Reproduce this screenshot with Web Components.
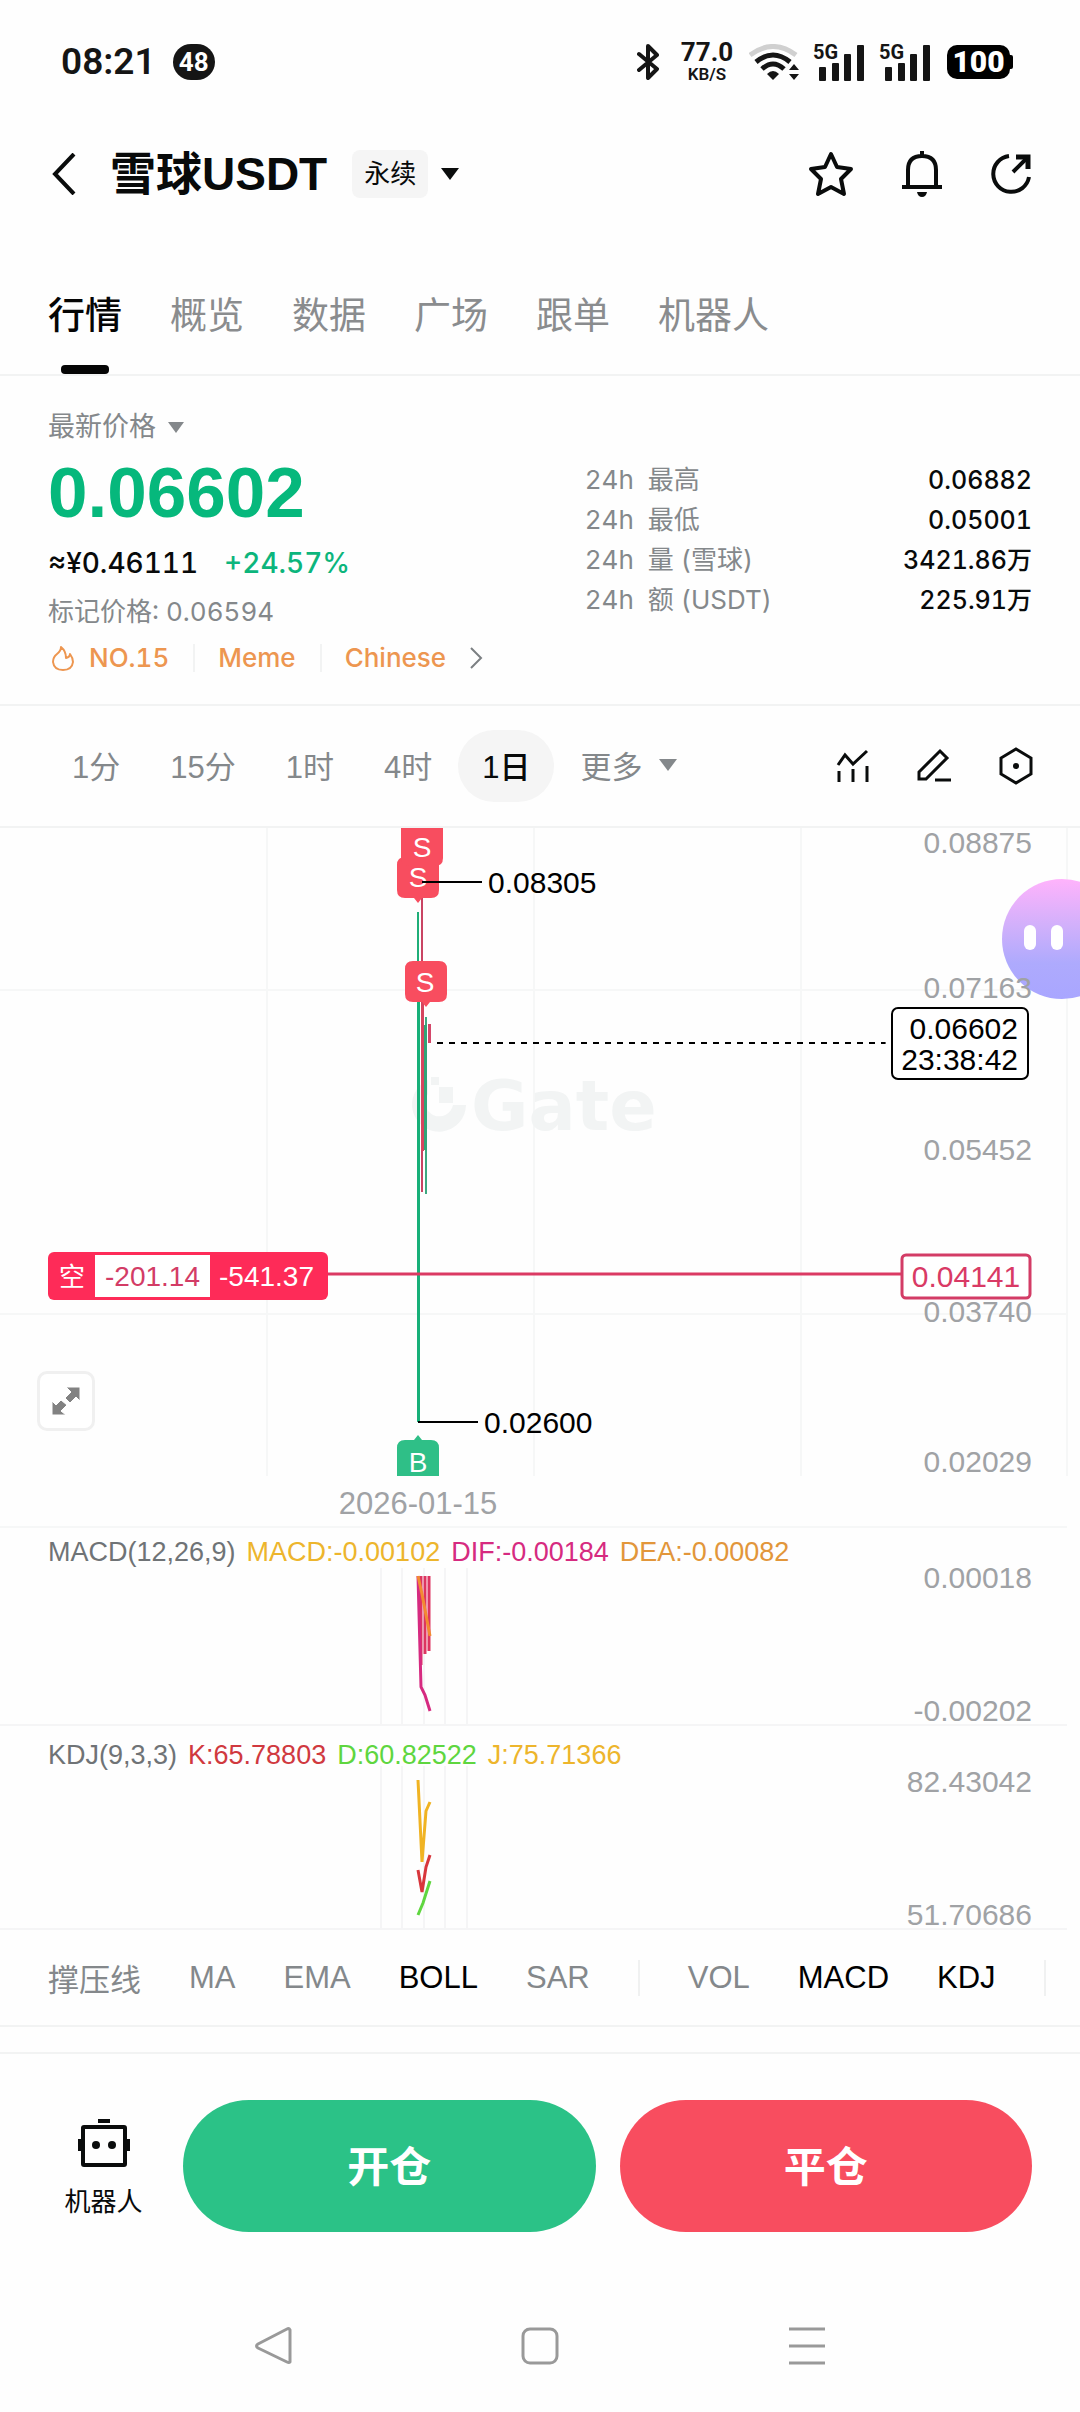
<!DOCTYPE html>
<html lang="zh-CN">
<head>
<meta charset="utf-8">
<meta name="viewport" content="width=device-width, initial-scale=1">
<title>雪球USDT 永续</title>
<style>
:root{--ink:#080a0a;--muted:#84888b;--axis:#a0a2a5;--line:#f2f3f3;--up:#2bc287;--down:#f84d5f;--gain:#0cb57c;--tag:#ed9650;--page:#fefefe;--ui:"Inter","Noto Sans CJK SC",sans-serif;--plot:"Liberation Sans","Noto Sans CJK SC",sans-serif}
body{margin:0;background:var(--page);color:var(--ink);font-family:var(--plot);min-height:100vh}
</style>
</head>
<body>
<trade-app></trade-app>
<script>
const base = `<style>
:host{display:block;box-sizing:border-box}
*,*::before{box-sizing:border-box}
button{appearance:none;border:0;background:none;padding:0;margin:0;font:inherit;color:inherit;cursor:pointer;display:flex;align-items:center;justify-content:center}
a{color:inherit;text-decoration:none}
svg{display:block;flex:none}
</style>`;
const define = (name, html) => customElements.define(name, class extends HTMLElement {
  constructor(){ super(); this.attachShadow({mode:'open'}).innerHTML = base + html; }
});

define('signal-bars', `<style>
:host{position:relative;width:52px;height:37px;margin-left:14px}
span{position:absolute;left:0;top:-4px;font-size:20px;line-height:24px;font-weight:700}
</style><svg width="52" height="37" viewBox="0 0 52 37" fill="#151515"><rect x="6" y="23" width="7" height="14" rx="1"/><rect x="19" y="19" width="7" height="18" rx="1"/><rect x="31" y="10" width="7" height="27" rx="1"/><rect x="44" y="1" width="7" height="36" rx="1"/></svg><span>5G</span>`);

define('status-bar', `<style>
:host{height:124px;padding:0 67px 0 61px;display:flex;align-items:center;justify-content:space-between;font-family:Roboto,sans-serif;font-weight:600;color:#151515}
.l,.r{display:flex;align-items:center}
.time{font-size:37px;line-height:40px}
.count{margin-left:17px;width:42px;height:36px;border-radius:18px;background:#151515;color:#fff;font-size:26px;line-height:36px;text-align:center;font-weight:700}
.speed{display:flex;flex-direction:column;align-items:center;margin:0 14px 0 20px;width:56px}
.speed b{font-size:26px;line-height:24px;font-weight:700}
.speed i{font-size:17px;line-height:20px;font-style:normal}
.bat{margin-left:16px;display:flex;align-items:center}
.bat b{background:#000;color:#fff;border-radius:10px;width:63px;height:34px;font-size:30px;line-height:34px;text-align:center}
.bat::after{content:"";width:3px;height:14px;background:#000;border-radius:0 2px 2px 0}
</style>
<div class="l"><span class="time">08:21</span><span class="count">48</span></div>
<div class="r">
<svg width="22" height="36" viewBox="0 0 22 36" fill="none" stroke="#151515" stroke-width="4" stroke-linejoin="round" stroke-linecap="round"><path d="M2 10 20 25 11 34V2L20 11 2 26"/></svg>
<span class="speed"><b>77.0</b><i>KB/S</i></span>
<svg width="50" height="36" viewBox="0 0 50 36" fill="none" stroke-width="5"><path d="M1 11Q24-6 47 11" stroke="#d0d0d0"/><path d="M7 18Q24 4 41 18M13 25Q24 15 35 25" stroke="#151515"/><path d="M18 30Q24 24 30 30L24 36Z" fill="#151515"/><path d="M40 26 45 20 50 26ZM40 30 45 36 50 30Z" fill="#151515"/></svg>
<signal-bars></signal-bars><signal-bars></signal-bars>
<span class="bat"><b>100</b></span>
</div>`);

define('pair-header', `<style>
:host{height:100px;padding:0 48px 0 52px;display:flex;align-items:center;justify-content:space-between}
.l,.r{display:flex;align-items:center}
h1{margin:0 0 0 34px;font-size:46px;line-height:60px;font-weight:700;font-family:var(--plot)}
.kind{margin:0 12px 0 25px;gap:13px;font-size:26px}
.kind span{background:#f5f5f5;border-radius:8px;width:76px;line-height:48px}
.r{gap:47px}
</style>
<div class="l"><button aria-label="返回"><svg width="24" height="42" viewBox="0 0 24 42" fill="none" stroke="#0a0c0c" stroke-width="4"><path d="M22 1 3 21 22 41"/></svg></button>
<h1>雪球USDT</h1>
<button class="kind"><span>永续</span><svg width="18" height="12"><path d="M0 0H18L9 12Z" fill="#0a0c0c"/></svg></button></div>
<div class="r">
<button aria-label="收藏"><svg width="46" height="46" viewBox="0 0 46 46" fill="none" stroke="#0a0c0c" stroke-width="4" stroke-linejoin="round"><path d="M23 3 29 16 43 18 33 28 36 43 23 36 10 43 13 28 3 18 17 16Z"/></svg></button>
<button aria-label="提醒"><svg width="42" height="48" viewBox="0 0 42 48" fill="none" stroke="#0a0c0c" stroke-width="4"><path d="M21 1V6M7 37V20Q7 6 21 6T35 20V37M1 37H41"/><path d="M16 42H26Q25 47 21 47T16 42Z" fill="#0a0c0c" stroke="none"/></svg></button>
<button aria-label="分享"><svg width="42" height="42" viewBox="0 0 42 42" fill="none" stroke="#0a0c0c" stroke-width="4"><path d="M19 3A18 18 0 1 0 39 24M23 19 37 5"/><path d="M26 4H38V16" stroke-width="5"/></svg></button>
</div>`);

define('market-tabs', `<style>
:host{border-bottom:2px solid var(--line);padding:52px 48px 0}
nav{display:flex;gap:48px;height:98px}
a{display:flex;flex-direction:column;align-items:center;justify-content:space-between;padding-top:14px;font-size:37px;line-height:54px;color:#8a8c8e}
a[aria-current]{color:#050505;font-weight:500}
a[aria-current]::after{content:"";width:48px;height:9px;border-radius:4px;background:#050505}
</style>
<nav><a href="#m" aria-current="page">行情</a><a href="#o">概览</a><a href="#d">数据</a><a href="#s">广场</a><a href="#c">跟单</a><a href="#b">机器人</a></nav>`);

define('price-summary', `<style>
:host{display:grid;grid-template-columns:6fr 5fr;padding:33px 48px 28px;border-bottom:2px solid var(--line);font-family:var(--ui);font-variant-numeric:tabular-nums;color:var(--muted);font-size:26px}
.src{font-size:27px;line-height:36px;gap:12px}
.last{font-family:var(--plot);font-size:71px;line-height:96px;font-weight:700;color:#06b87c}
.conv{display:flex;gap:26px;font-size:28px;line-height:44px;font-weight:500;color:var(--ink)}
.conv em{font-style:normal;color:var(--gain)}
.mark{line-height:54px}
.tags{display:flex;align-items:center;line-height:37px;font-weight:500;color:var(--tag)}
.tags a+a{border-left:2px solid var(--line);margin-left:24px;padding-left:23px;line-height:28px}
.tags a:first-child{display:flex;align-items:center;gap:15px;padding-left:4px}
.tags button{margin-left:24px}
dl{margin:51px 0 0}
dl div{display:flex;justify-content:space-between;line-height:40px}
dt{white-space:pre}
dd{margin:0;color:var(--ink);font-weight:500;font-size:25px}
</style>
<section><button class="src">最新价格<svg width="16" height="11"><path d="M0 0H16L8 11Z" fill="#84888b"/></svg></button>
<div class="last">0.06602</div>
<div class="conv"><span>≈¥0.46111</span><em>+24.57%</em></div>
<div class="mark">标记价格: 0.06594</div>
<div class="tags"><a href="#rank"><svg width="22" height="26" viewBox="0 0 22 26" fill="none" stroke="#ed9650" stroke-width="2" stroke-linejoin="round"><path d="M9 2Q14 6 14 13Q18 12 18 9Q21 13 21 17Q20 25 11 25Q2 25 1 17Q1 12 5 9Q9 6 9 2Z"/></svg>NO.15</a><a href="#meme">Meme</a><a href="#chinese">Chinese</a>
<button aria-label="更多标签"><svg width="13" height="22" viewBox="0 0 13 22" fill="none" stroke="#7b7f82" stroke-width="2"><path d="M1 1 11 11 1 21"/></svg></button></div></section>
<dl><div><dt>24h  最高</dt><dd>0.06882</dd></div><div><dt>24h  最低</dt><dd>0.05001</dd></div><div><dt>24h  量 (雪球)</dt><dd>3421.86万</dd></div><div><dt>24h  额 (USDT)</dt><dd>225.91万</dd></div></dl>`);

define('time-frames', `<style>
:host{height:122px;border-bottom:2px solid var(--line);padding:0 46px 0 48px;display:flex;align-items:center;justify-content:space-between;font-size:31px;color:var(--muted)}
div{display:flex;align-items:center;gap:2px}
.t button{height:72px;padding:0 24px 3px;border-radius:36px;gap:17px}
.t [aria-pressed=true]{background:#f5f5f5;color:var(--ink);font-weight:500}
.i{gap:46px}
</style>
<div class="t"><button>1分</button><button>15分</button><button>1时</button><button>4时</button><button aria-pressed="true">1日</button><button>更多<svg width="18" height="12"><path d="M0 0H18L9 12Z" fill="#84888b"/></svg></button></div>
<div class="i">
<button aria-label="指标"><svg width="34" height="34" viewBox="0 0 34 34" fill="none" stroke="#0a0c0c" stroke-width="3"><path d="M2 16 9 6 17 15 31 2M3 22V33M17 20V33M31 17V33"/></svg></button>
<button aria-label="画线"><svg width="36" height="36" viewBox="0 0 36 36" fill="none" stroke="#0a0c0c" stroke-width="3"><path d="M3 24 24 3 31 10 10 31H3ZM19 32H35"/></svg></button>
<button aria-label="设置"><svg width="36" height="38" viewBox="0 0 36 38" fill="none" stroke="#0a0c0c" stroke-width="3"><path d="M18 2 33 11V27L18 36 3 27V11Z"/><circle cx="18" cy="19" r="3" fill="#0a0c0c" stroke="none"/></svg></button>
</div>`);

define('candle-chart', `<style>
:host{position:relative;height:700px;overflow-x:clip;font-size:30px}
.grid{stroke:#f6f7f7;stroke-width:2;position:absolute}
.axis{fill:var(--axis);text-anchor:end}
.s{fill:#fff;font-size:28px;text-anchor:middle}
.expand{position:absolute;left:37px;top:543px;width:58px;height:60px;border:3px solid #f0f0f0;border-radius:10px;background:#fff}
.bot{position:absolute;right:-42px;top:51px;width:120px;height:120px;border-radius:60px;background:linear-gradient(#ffb3fc,#d0b0fb 40%,#aeaafd 70%,#a9a6ff);justify-content:flex-start;gap:15px;padding:0 0 4px 22px}
.bot i{width:12px;height:25px;border-radius:6px;background:#fff}
.top{position:relative;overflow:visible}
</style>
<svg class="grid" width="100%" height="700"><path d="M267 0V648M534 0V648M801 0V648M1067 0V648"/><line x1="0" x2="1067" y1="162" y2="162"/><line x1="0" x2="1067" y1="486" y2="486"/><line x1="0" x2="1067" y1="699" y2="699"/></svg>
<button class="bot" aria-label="助手"><i></i><i></i></button>
<svg class="top" width="100%" height="700">
<g fill="#f2f4f4"><path d="M428 252A27 27 0 1 0 466 277H453A14 14 0 1 1 428 266ZM431 249H439V257H431ZM439 259H453V275H439Z"/><text x="471" y="302" font-family="DejaVu Sans" font-weight="700" font-size="70">Gate</text></g>
<g>
<rect x="417" y="84" width="2" height="60" fill="#1fae78"/><rect x="417" y="144" width="3" height="450" fill="#17b079"/>
<rect x="421" y="66" width="2" height="298" fill="#c94463"/><rect x="421" y="175" width="3" height="148" fill="#d6455f"/>
<rect x="425" y="189" width="2" height="177" fill="#3da880"/><rect x="424" y="197" width="3" height="125" fill="#30a577"/>
<rect x="428" y="196" width="3" height="19" fill="#d4476a"/></g>
<path d="M405 29H431Q439 29 439 37V62Q439 70 431 70H422L418 75 414 70H405Q397 70 397 62V37Q397 29 405 29Z" fill="var(--down)"/>
<text class="s" x="418" y="59">S</text>
<path d="M401 0H443V30Q443 38 435 38H409Q401 38 401 30Z" fill="var(--down)"/><text class="s" x="422" y="29">S</text>
<path d="M413 133H439Q447 133 447 141V166Q447 174 439 174H430L426 179 422 174H413Q405 174 405 166V141Q405 133 413 133Z" fill="var(--down)"/><text class="s" x="425" y="164">S</text>
<path d="M397 648V620Q397 612 405 612H414L418 607 422 612H431Q439 612 439 620V648Z" fill="#2fbf87"/><text class="s" x="418" y="644">B</text>
<path d="M422 54H482M418 594H478" stroke="#000" stroke-width="2"/>
<text x="488" y="65" fill="#000">0.08305</text><text x="484" y="605" fill="#000">0.02600</text>
<text x="418" y="686" text-anchor="middle" font-size="31" fill="#a0a2a5">2026-01-15</text>
<line x1="328" x2="90%" y1="446" y2="446" stroke="#db3a63" stroke-width="3"/>
<line x1="437" x2="82%" y1="215" y2="215" stroke="#000" stroke-width="2" stroke-dasharray="6 6"/>
<rect x="48" y="424" width="280" height="48" rx="6" fill="#fe2b58"/><rect x="95" y="427" width="115" height="42" fill="#fff"/>
<g font-size="28"><text x="59" y="458" font-size="26" fill="#fff">空</text><text x="105" y="458" fill="#d33c66">-201.14</text><text x="219" y="458" fill="#fff">-541.37</text></g>
<svg x="100%" overflow="visible"><g class="axis"><text x="-48" y="25">0.08875</text><text x="-48" y="170">0.07163</text><text x="-48" y="332">0.05452</text><text x="-48" y="494">0.03740</text><text x="-48" y="644">0.02029</text></g>
<rect x="-188" y="180" width="136" height="71" rx="6" fill="#fff" stroke="#000" stroke-width="2"/><text x="-62" y="211" text-anchor="end">0.06602</text><text x="-62" y="242" text-anchor="end">23:38:42</text>
<rect x="-178" y="427" width="128" height="43" rx="4" fill="#fff" stroke="#d33c66" stroke-width="3"/><text x="-114" y="459" text-anchor="middle" fill="#d93a65">0.04141</text></svg>
</svg>
<button class="expand" aria-label="全屏"><svg width="30" height="30" viewBox="0 0 30 30" fill="#828282"><path d="M15 1H29V15L25 11 19 17 14 12 20 6ZM1 15 5 19 10 14 16 19 10 25 15 29H1Z" stroke="#fff" stroke-width="1"/></svg></button>`);

const panel = (h, y1, y2, legend, labels, drawing) => `<style>
:host{display:grid;height:${h}px;font-size:27px}
svg,.legend{grid-area:1/1}
.legend{margin:0;padding:0 48px;display:flex;gap:11px;line-height:48px;height:48px}
.axis{fill:var(--axis);text-anchor:end;font-size:30px}
</style><svg width="100%" height="${h}"><path d="M381 40V${h-2}M402 40V${h-2}M424 40V${h-2}M445 40V${h-2}M467 40V${h-2}M0 ${h-1}H1067" stroke="#f5f5f6" stroke-width="2"/>
<g fill="none" stroke-width="3">${drawing}</g>
<svg x="100%" overflow="visible"><g class="axis"><text x="-48" y="${y1}">${labels[0]}</text><text x="-48" y="${y2}">${labels[1]}</text></g></svg></svg>
<p class="legend">${legend}</p>`;

define('macd-panel', panel(198, 60, 193, `<span style="color:#6f7376">MACD(12,26,9)</span><span style="color:#edb52c">MACD:-0.00102</span><span style="color:#d62a80">DIF:-0.00184</span><span style="color:#e2963a">DEA:-0.00082</span>`, ['0.00018','-0.00202'],
`<path d="M421 48V137M425 48V126M429 48V123" stroke="#dd3560"/><path d="M418 48 421 159 425 167 430 183" stroke="#d62a80"/><path d="M418 48 422 66 430 108" stroke="#f28a32"/>`));
define('kdj-panel', `<style>.legend{padding-top:5px!important}</style>` + panel(204, 66, 199, `<span style="color:#6f7376">KDJ(9,3,3)</span><span style="color:#d0393f">K:65.78803</span><span style="color:#5fd63f">D:60.82522</span><span style="color:#edb52c">J:75.71366</span>`, ['82.43042','51.70686'],
`<path d="M418 54 422 136 426 85 430 76" stroke="#f0b323"/><path d="M418 144 422 166 426 141 430 129" stroke="#d8363c"/><path d="M418 189 423 177 430 155" stroke="#5fd63f"/>`));

define('indicator-bar', `<style>
:host{height:97px;padding:0 0 0 48px;display:flex;align-items:center;gap:48px;border-bottom:2px solid var(--line);font-size:31px;color:var(--muted);overflow:hidden}
button{flex:none}
[aria-pressed=true]{color:#000}
i{flex:none;width:2px;height:36px;background:#f0f1f1}
</style><button>撑压线</button><button>MA</button><button>EMA</button><button aria-pressed="true">BOLL</button><button>SAR</button><i></i><button>VOL</button><button aria-pressed="true">MACD</button><button aria-pressed="true">KDJ</button><i></i>`);

define('trade-bar', `<style>
:host{margin-top:25px;border-top:2px solid var(--line);padding:46px 48px 0;display:flex;gap:24px}
.go{flex:1;height:132px;border-radius:66px;color:#fff;font-size:42px;font-weight:700;padding-bottom:6px}
.open{background:var(--up)}.close{background:var(--down)}
.bot{width:111px;flex-direction:column;gap:15px;padding-top:6px;font-size:26px;line-height:38px}
</style><button class="bot"><svg width="52" height="50" viewBox="0 0 52 50" fill="none" stroke="#0a0c0c" stroke-width="4"><rect x="5" y="9" width="42" height="38" rx="1"/><path d="M20 3H32M2 21V33M50 21V33"/><circle cx="18" cy="27" r="4" fill="#0a0c0c" stroke="none"/><circle cx="34" cy="27" r="4" fill="#0a0c0c" stroke="none"/></svg>机器人</button><button class="go open">开仓</button><button class="go close">平仓</button>`);

define('system-nav', `<style>
:host{margin-top:48px;height:132px;display:flex;align-items:center;justify-content:center;gap:229px}
</style>
<button aria-label="返回"><svg width="38" height="38" viewBox="0 0 38 38" fill="none" stroke="#999" stroke-width="3" stroke-linejoin="round"><path d="M36 3V35Q35 36 33 35L4 21Q1 19 4 17L33 2Q35 1 36 3Z"/></svg></button>
<button aria-label="主页"><svg width="38" height="38" viewBox="0 0 38 38" fill="none" stroke="#999" stroke-width="3"><rect x="2" y="2" width="34" height="34" rx="7"/></svg></button>
<button aria-label="任务"><svg width="38" height="38" viewBox="0 0 38 38" stroke="#999" stroke-width="3"><path d="M1 2H37M1 19H37M1 36H37"/></svg></button>`);

define('trade-app', `<status-bar></status-bar><pair-header></pair-header><market-tabs></market-tabs><price-summary></price-summary><time-frames></time-frames><candle-chart></candle-chart><macd-panel></macd-panel><kdj-panel></kdj-panel><indicator-bar></indicator-bar><trade-bar></trade-bar><system-nav></system-nav>`);
</script>
</body>
</html>
